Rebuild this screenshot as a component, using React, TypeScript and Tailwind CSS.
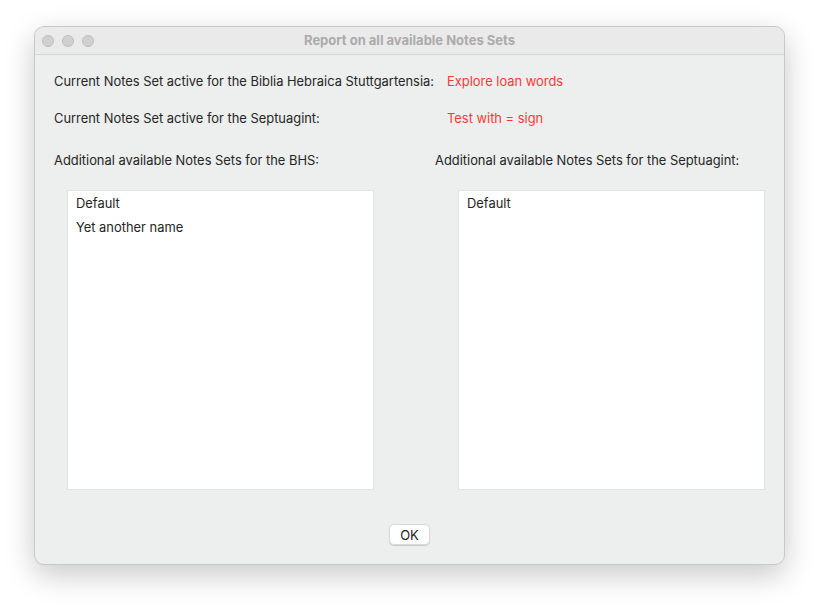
import React from "react";

export default function App() {
  const font = { fontFamily: 'Inter, "Liberation Sans", Arial, sans-serif' };
  return (
    <div className="w-[819px] h-[607px] bg-white pt-[26px] pl-[34px]" style={font}>
      <div className="w-[751px] h-[539px] rounded-[10px] bg-[#edeeee] border border-[#c8c8c8] shadow-[0_10px_30px_rgba(0,0,0,0.22)] overflow-hidden flex flex-col">
        <div className="h-[28px] shrink-0 relative flex items-center justify-center border-b border-[#d6d6d6] bg-[#eaeaea]">
          <div className="absolute left-[7px] top-[8px] flex gap-[8px]">
            <div className="w-[12px] h-[12px] rounded-full bg-[#d0d0d0] border border-[#bdbdbd]" />
            <div className="w-[12px] h-[12px] rounded-full bg-[#d0d0d0] border border-[#bdbdbd]" />
            <div className="w-[12px] h-[12px] rounded-full bg-[#d0d0d0] border border-[#bdbdbd]" />
          </div>
          <span className="text-[13px] font-bold text-[#ababab]">Report on all available Notes Sets</span>
        </div>
        <div className="flex-1 pl-[19px] pt-[19px] text-[12.9px] text-[#262626] leading-[16px]">
          <div className="flex">
            <span className="w-[393px]">Current Notes Set active for the Biblia Hebraica Stuttgartensia:</span>
            <span className="text-[#f53b36]">Explore loan words</span>
          </div>
          <div className="flex mt-[21px]">
            <span className="w-[393px]">Current Notes Set active for the Septuagint:</span>
            <span className="text-[#f53b36]">Test with = sign</span>
          </div>
          <div className="flex mt-[26px]">
            <span className="w-[381px]">Additional available Notes Sets for the BHS:</span>
            <span>Additional available Notes Sets for the Septuagint:</span>
          </div>
          <div className="flex mt-[21px]">
            <div className="ml-[13px] w-[307px] h-[300px] bg-white border border-[#e2e2e2] pl-[8px] pt-[1px]">
              <div className="h-[24px] flex items-center">Default</div>
              <div className="h-[24px] flex items-center">Yet another name</div>
            </div>
            <div className="ml-[84px] w-[307px] h-[300px] bg-white border border-[#e2e2e2] pl-[8px] pt-[1px]">
              <div className="h-[24px] flex items-center">Default</div>
            </div>
          </div>
          <div className="flex justify-center mt-[34px] pr-[19px]">
            <button className="w-[41px] h-[21px] bg-white rounded-[5px] border border-[#d8d8d8] shadow-[0_1px_1px_rgba(0,0,0,0.15)] text-[13px] text-[#222]">
              OK
            </button>
          </div>
        </div>
      </div>
    </div>
  );
}
